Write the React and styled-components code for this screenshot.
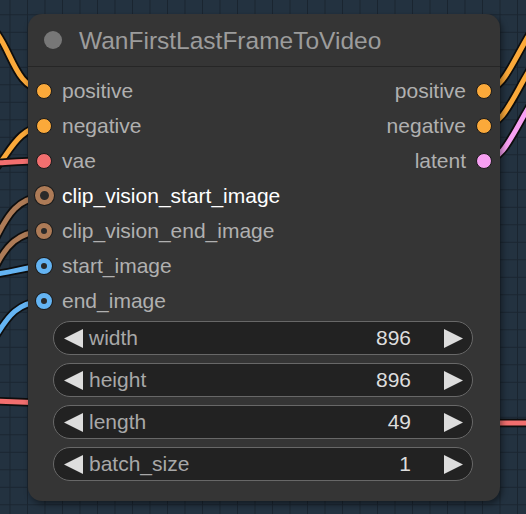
import React from "react";
import styled, { createGlobalStyle } from "styled-components";

const GlobalStyle = createGlobalStyle`
  html, body {
    margin: 0;
    padding: 0;
    background: #22303c;
  }
`;

const Canvas = styled.div`
  position: relative;
  width: 526px;
  height: 514px;
  overflow: hidden;
  box-sizing: border-box;
  padding: 14px 26px 13px 28px;
  background-color: #233240;
  background-image: linear-gradient(#1a2530 1px, transparent 1px),
    linear-gradient(90deg, #1a2530 1px, transparent 1px);
  background-size: 17.5px 17.5px;
  background-position: 9.5px 14.3px;
  font-family: "Liberation Sans", Arial, sans-serif;
`;

const Wires = styled.svg`
  position: absolute;
  left: 0;
  top: 0;
  width: 526px;
  height: 514px;
`;

const Node = styled.div`
  position: relative;
  width: 472px;
  height: 487px;
  box-sizing: border-box;
  background: #353535;
  border-radius: 14px;
  box-shadow: 2px 3px 6px rgba(0, 0, 0, 0.45);
  display: flex;
  flex-direction: column;
`;

const TitleBar = styled.div`
  height: 52px;
  display: flex;
  align-items: center;
  gap: 17px;
  padding-left: 16px;
  border-bottom: 1.5px solid #262626;
`;

const TitleDot = styled.div`
  width: 18px;
  height: 18px;
  border-radius: 50%;
  background: #777;
`;

const Title = styled.div`
  font-size: 24.5px;
  color: #9c9c9c;
  margin-top: 1px;
`;

const Slots = styled.div`
  padding-top: 6px;
  display: flex;
  flex-direction: column;
`;

const Row = styled.div`
  height: 35px;
  display: grid;
  grid-template-columns: 1fr 1fr;
`;

const Side = styled.div`
  display: flex;
  align-items: center;
  justify-content: ${(p) => (p.$right ? "flex-end" : "flex-start")};
  gap: 10px;
  padding: ${(p) => (p.$right ? "0 8px 0 0" : "0 0 0 8px")};
`;

const Dot = styled.div`
  box-sizing: border-box;
  flex: none;
  width: ${(p) => p.$size || 16}px;
  height: ${(p) => p.$size || 16}px;
  margin: ${(p) => (p.$size ? `0 ${(16 - p.$size) / 2}px` : 0)};
  border-radius: 50%;
  background: ${(p) => (p.$ring ? "#2a2a2a" : p.$color)};
  border: ${(p) =>
    p.$ring ? `${p.$ring}px solid ${p.$color}` : "1.5px solid #1a1a1a"};
  box-shadow: ${(p) => (p.$ring ? "0 0 0 1px #1c1c1c" : "none")};
`;

const Label = styled.span`
  font-size: 21px;
  color: ${(p) => (p.$active ? "#ffffff" : "#b0b0b0")};
  white-space: nowrap;
`;

const Widgets = styled.div`
  display: flex;
  flex-direction: column;
  gap: 8px;
  padding: 3px 27px 0 25px;
`;

const Widget = styled.div`
  height: 34px;
  box-sizing: border-box;
  border: 1.5px solid #686868;
  border-radius: 17px;
  background: #222222;
  display: flex;
  align-items: center;
  padding: 0 9px 0 10px;
  font-size: 21px;
`;

const WidgetLabel = styled.span`
  color: #a8a8a8;
  margin-left: 6px;
  flex: 1;
`;

const WidgetValue = styled.span`
  color: #dddddd;
  margin-right: 33px;
`;

const Arrow = ({ dir }) => (
  <svg width="19" height="19" viewBox="0 0 19 19">
    <polygon
      points={dir === "left" ? "19,0 0,9.5 19,19" : "0,0 19,9.5 0,19"}
      fill="#dddddd"
    />
  </svg>
);

const ORANGE = "#fba93a";
const RED = "#f26f6f";
const BROWN = "#ad7b57";
const BLUE = "#64b4f3";
const PINK = "#f7a0f2";

const wires = [
  { d: "M -4 32 C 12 52, 16 88, 44 91", c: ORANGE },
  { d: "M -4 168 C 10 152, 18 128, 44 126", c: ORANGE },
  { d: "M -4 163 C 14 162, 28 161, 44 161", c: RED },
  { d: "M -4 238 C 8 214, 18 198, 44 196", c: BROWN },
  { d: "M -4 266 C 6 246, 18 232, 44 231", c: BROWN },
  { d: "M -4 274 C 14 272, 26 267, 44 266", c: BLUE },
  { d: "M -4 336 C 8 316, 18 302, 44 301", c: BLUE },
  { d: "M -4 401 L 44 403", c: RED },
  { d: "M 484 91 C 504 90, 512 62, 532 30", c: ORANGE },
  { d: "M 484 126 C 504 125, 512 98, 532 66", c: ORANGE },
  { d: "M 484 161 C 504 160, 512 134, 532 102", c: PINK },
  { d: "M 484 423 L 530 423", c: RED },
];

const inputs = [
  { name: "positive", color: ORANGE },
  { name: "negative", color: ORANGE },
  { name: "vae", color: RED },
  { name: "clip_vision_start_image", color: BROWN, ring: 5, size: 19, active: true },
  { name: "clip_vision_end_image", color: BROWN, ring: 5 },
  { name: "start_image", color: BLUE, ring: 5 },
  { name: "end_image", color: BLUE, ring: 5 },
];

const outputs = [
  { name: "positive", color: ORANGE },
  { name: "negative", color: ORANGE },
  { name: "latent", color: PINK },
];

const widgets = [
  { name: "width", value: 896 },
  { name: "height", value: 896 },
  { name: "length", value: 49 },
  { name: "batch_size", value: 1 },
];

export default function App() {
  return (
    <Canvas>
      <GlobalStyle />
      <Wires viewBox="0 0 526 514">
        {wires.map((w, i) => (
          <g key={i} fill="none" strokeLinecap="round">
            <path d={w.d} stroke="#0d0d0d" strokeWidth="8.5" />
            <path d={w.d} stroke={w.c} strokeWidth="5" />
          </g>
        ))}
      </Wires>
      <Node>
        <TitleBar>
          <TitleDot />
          <Title>WanFirstLastFrameToVideo</Title>
        </TitleBar>
        <Slots>
          {inputs.map((inp, i) => {
            const out = outputs[i];
            return (
              <Row key={inp.name}>
                <Side>
                  <Dot $color={inp.color} $ring={inp.ring} $size={inp.size} />
                  <Label $active={inp.active}>{inp.name}</Label>
                </Side>
                <Side $right>
                  {out && (
                    <>
                      <Label>{out.name}</Label>
                      <Dot $color={out.color} />
                    </>
                  )}
                </Side>
              </Row>
            );
          })}
        </Slots>
        <Widgets>
          {widgets.map((w) => (
            <Widget key={w.name}>
              <Arrow dir="left" />
              <WidgetLabel>{w.name}</WidgetLabel>
              <WidgetValue>{w.value}</WidgetValue>
              <Arrow dir="right" />
            </Widget>
          ))}
        </Widgets>
      </Node>
    </Canvas>
  );
}
